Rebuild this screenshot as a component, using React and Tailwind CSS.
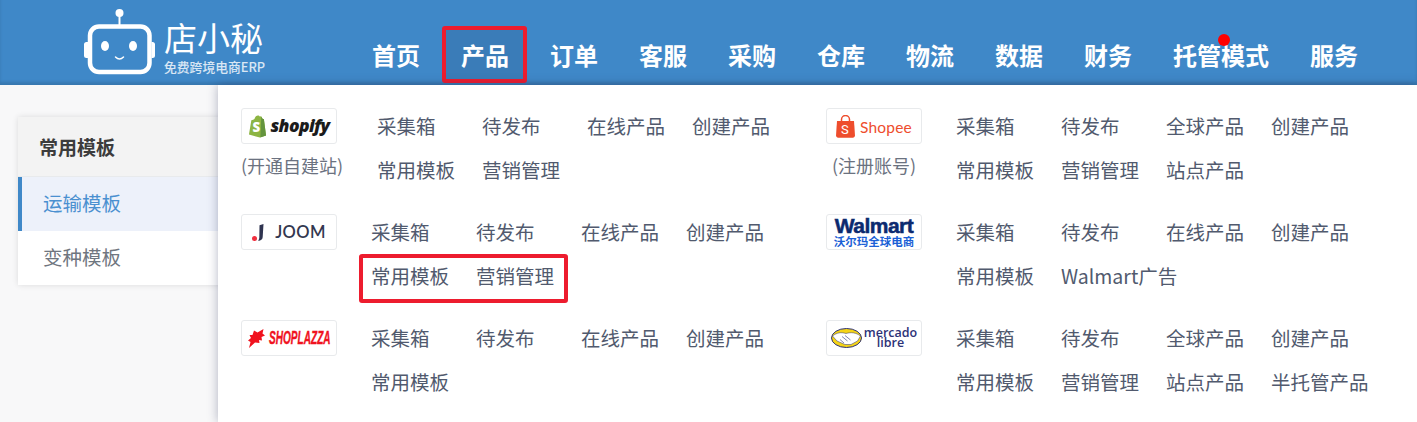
import React from 'react';

const CJK = 'font-["Noto_Sans_CJK_SC",sans-serif]';

const NAV = ['首页', '产品', '订单', '客服', '采购', '仓库', '物流', '数据', '财务', '托管模式', '服务'];

const RobotLogo = () => (
  <svg width="72" height="68" viewBox="84 8 72 68" fill="none" className="shrink-0">
    <circle cx="119.5" cy="13" r="4" fill="#fff" />
    <path d="M119.5 16v9" stroke="#fff" strokeWidth="2" />
    <rect x="90" y="26.5" width="59.5" height="45.5" rx="9" stroke="#fff" strokeWidth="4.5" />
    <path d="M88 42h-1.500a2.500 2.500 0 0 0-2.500 2.500v11a2.500 2.500 0 0 0 2.500 2.500H88zM151.500 42h1a2.500 2.500 0 0 1 2.500 2.500v11a2.500 2.500 0 0 1-2.500 2.500h-1z" fill="#fff" />
    <ellipse cx="105" cy="46" rx="4" ry="5" fill="#fff" />
    <ellipse cx="133" cy="46" rx="4" ry="5" fill="#fff" />
    <path d="M115.500 57c2.500 2.500 5.500 2.500 8 0" stroke="#fff" strokeWidth="1.500" strokeLinecap="round" />
  </svg>
);

const ShopifyLogo = () => (
  <div className="flex items-center gap-[3px]">
    <svg width="19" height="23" viewBox="0 0 20 24">
      <path d="M1 20.500 3.500 5.500C5 5 6 4.500 6.800 4 7.500 1.500 9 .3 10.500.3c1 0 1.500.5 2 1.200l1.300-.3L15.500 4l1.200.2L19 21.500 12.500 23.500z" fill="#8db543" />
      <path d="M14 1.500 15.500 4l1.200.2L19 21.500l-6 2z" fill="#64943e" />
      <text x="4.800" y="18" fontSize="14" fontWeight="800" fill="#fff" fontFamily="Open Sans, sans-serif">S</text>
    </svg>
    <span className="font-['Open_Sans',sans-serif] text-[17.500px] leading-none font-extrabold italic tracking-[-0.6px] text-[#1b1b1b]">shopify</span>
  </div>
);

const ShopeeLogo = () => (
  <div className="flex items-center gap-[5px]">
    <svg width="19" height="23" viewBox="0 0 19 23">
      <path d="M1 6h17l1 14.500c0 1.200-1 2.200-2.200 2.200H2.200C1 22.700 0 21.700 0 20.500z" fill="#ee4d2d" />
      <path d="M5.500 7V4.500a4 4 0 0 1 8 0V7" fill="none" stroke="#ee4d2d" strokeWidth="1.500" />
      <text x="5" y="18.500" fontSize="13" fill="#fff" fontFamily="Roboto, sans-serif">S</text>
    </svg>
    <span className="mt-[3px] font-['Lato',sans-serif] text-[15.500px] leading-none tracking-[0.2px] text-[#ee4d2d]">Shopee</span>
  </div>
);

const JoomLogo = () => (
  <div className="flex items-center gap-[11px]">
    <svg width="12" height="17" viewBox="0 0 12 17">
      <circle cx="2.500" cy="14.500" r="2.500" fill="#f0303f" />
      <path d="M7.500 1.200 11.500 0l-.8 13c-.1 2-1.500 3.500-3.500 3.800H6c1-1 1.300-2.300 1.300-3.800z" fill="#2f3450" />
    </svg>
    <span className="mt-px font-['Lato',sans-serif] text-[16.500px] leading-none font-semibold tracking-[0.4px] text-[#33374f]">JOOM</span>
  </div>
);

const WalmartLogo = () => (
  <div className="flex flex-col items-center">
    <span className="font-['Liberation_Sans',sans-serif] text-[21px] leading-[17px] font-bold tracking-[-0.5px] text-[#0b2a6f] [-webkit-text-stroke:0.5px_#0b2a6f]">Walmart</span>
    <span className={`${CJK} mt-[1px] text-[11.500px] leading-[12px] font-bold text-[#1a5fd6]`}>沃尔玛全球电商</span>
  </div>
);

const ShoplazzaLogo = () => (
  <div className="flex items-center">
    <svg width="17" height="19" viewBox="0 0 17 19" className="shrink-0">
      <path d="M6 1.500 9.500 3.500 15.500 0 14.500 4.500 17 6.500 13.500 8 14 11.500 11 11 11.500 14 7 13.500 1 19 2.500 13 0 11.500 3 9 1.500 6 4.500 6z" fill="#f0121e" />
    </svg>
    <span className="ml-[4px] w-[62px] font-['Liberation_Sans',sans-serif] text-[18px] leading-none font-bold italic whitespace-nowrap text-[#f0121e] origin-left scale-x-[.56] [-webkit-text-stroke:0.4px_#f0121e]">SHOPLAZZA</span>
  </div>
);

const MercadoLogo = () => (
  <div className="flex items-center gap-[2px]">
    <svg width="31" height="20" viewBox="0 0 31 20">
      <ellipse cx="15.500" cy="10" rx="15" ry="9.500" fill="#f5d416" stroke="#2d3277" strokeWidth="1" />
      <path d="M1.500 8C6 4.500 10 4 15 5.500 20 4 25 4.500 29.500 8l-3 5-6.500 3.500h-6L6 13z" fill="#fff" stroke="#2d3277" strokeWidth=".5" />
      <path d="M11 8.500l5.500 4.500M14 7.500l5.500 4.500M9 11.500l4 3.500" stroke="#2d3277" strokeWidth=".6" />
    </svg>
    <div className="flex flex-col items-center font-['Open_Sans',sans-serif] text-[12.500px] leading-[10.500px] font-semibold text-[#2d3277]">
      <span>mercado</span>
      <span>libre</span>
    </div>
  </div>
);

const GROUPS = [
  { logo: <ShopifyLogo />, note: '(开通自建站)', noteWide: true, items: ['采集箱', '待发布', '在线产品', '创建产品', '常用模板', '营销管理'] },
  { logo: <ShopeeLogo />, note: '(注册账号)', items: ['采集箱', '待发布', '全球产品', '创建产品', '常用模板', '营销管理', '站点产品'] },
  { logo: <JoomLogo />, marked: true, items: ['采集箱', '待发布', '在线产品', '创建产品', '常用模板', '营销管理'] },
  { logo: <WalmartLogo />, items: ['采集箱', '待发布', '在线产品', '创建产品', '常用模板', 'Walmart广告'] },
  { logo: <ShoplazzaLogo />, items: ['采集箱', '待发布', '在线产品', '创建产品', '常用模板'] },
  { logo: <MercadoLogo />, items: ['采集箱', '待发布', '全球产品', '创建产品', '常用模板', '营销管理', '站点产品', '半托管产品'] },
];

const Group = ({ group }) => (
  <div className="flex h-[106px] items-start">
    <div className={`flex flex-col ${group.noteWide ? 'w-[102px] items-start' : 'w-[96px] items-center'}`}>
      <div className="flex h-[36px] w-[96px] items-center justify-center overflow-hidden rounded-[3px] border border-[#e8eaec] bg-white">
        {group.logo}
      </div>
      {group.note && (
        <div className="mt-[10px] text-[18px] leading-[22px] whitespace-nowrap text-[#6b7280]">{group.note}</div>
      )}
    </div>
    <div className="relative -mt-px ml-[34px] flex w-[422px] flex-wrap">
      {group.items.map((item, i) => (
        <div key={i} className="mb-[6px] h-[38px] w-[105px] text-[19.500px] leading-[38px] whitespace-nowrap text-[#515a6e]">
          {item}
        </div>
      ))}
      {group.marked && (
        <div className="absolute top-[41px] left-[-12px] h-[49px] w-[209px] rounded-[3px] border-4 border-[#ed1c2e]" />
      )}
    </div>
  </div>
);

export default function App() {
  return (
    <div className={`${CJK} relative h-[422px] w-[1417px] overflow-hidden bg-[#f8f8f9]`}>
      <header className="flex h-[85px] bg-[#3f88c8] shadow-[inset_0_-3px_3px_rgba(0,0,0,0.12)]">
        <div className="ml-[84px] flex h-[76px] w-[288px] items-start pt-[8px]">
          <RobotLogo />
          <div className="ml-[8px] flex flex-col text-white">
            <span className="mt-[10px] text-[33px] leading-[38px] font-normal whitespace-nowrap">店小秘</span>
            <span className="mt-[4px] text-[12.800px] leading-[14px] font-medium whitespace-nowrap text-white/80">免费跨境电商ERP</span>
          </div>
        </div>
        <nav className="flex h-full gap-[41px] pt-[37px]">
          {NAV.map((name) => (
            <div key={name} className="relative h-[36px] text-[24px] leading-[36px] font-bold whitespace-nowrap text-white">
              {name === '产品' && (
                <span className="absolute top-[-11px] left-[-19px] h-[57px] w-[85px] rounded-[3px] border-4 border-[#ed1c2e] bg-[#3a7cb8]" />
              )}
              <span className="relative">{name}</span>
              {name === '托管模式' && (
                <span className="absolute top-[-3px] left-[45px] h-[12px] w-[12px] rounded-full bg-[#ff0000]" />
              )}
            </div>
          ))}
        </nav>
      </header>

      <aside className="mt-[32px] ml-[18px] w-[260px] bg-white shadow-[0_0_6px_rgba(0,0,0,0.12)]">
        <div className="h-[60px] border-b border-[#e8eaec] bg-[#f3f3f3] pl-[21px] text-[19px] leading-[60px] font-bold text-[#3c3c3c]">常用模板</div>
        <div className="h-[54px] border-l-4 border-[#3f88c8] bg-[#edf1fa] pl-[21px] text-[19.500px] leading-[52px] text-[#4a90d0]">运输模板</div>
        <div className="h-[54px] pl-[25px] text-[19.500px] leading-[52px] text-[#6f7680]">变种模板</div>
      </aside>

      <div className="absolute top-[85px] left-[218px] grid h-[337px] w-[1199px] grid-cols-[585px_1fr] bg-white pt-[23px] pl-[23px] shadow-[0_0_10px_rgba(40,50,90,0.35)]">
        {GROUPS.map((group, i) => (
          <Group key={i} group={group} />
        ))}
      </div>
    </div>
  );
}
